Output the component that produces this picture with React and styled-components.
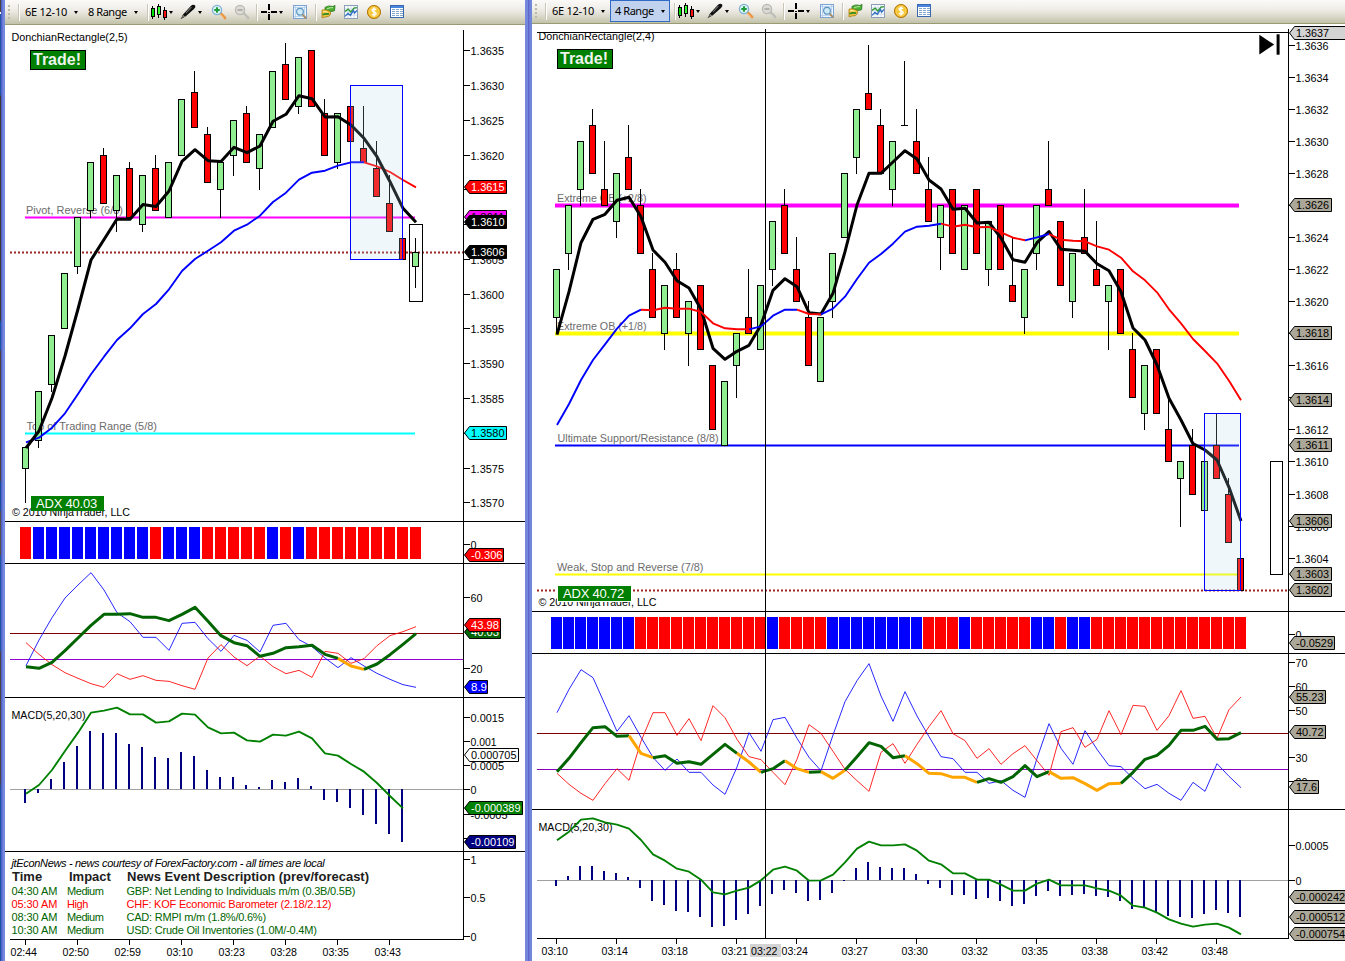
import React from "react";
import styled, { createGlobalStyle } from "styled-components";

const GlobalStyle = createGlobalStyle`
  html, body { margin: 0; padding: 0; background: #fff; overflow: hidden; }
  *, *::before, *::after { box-sizing: border-box; }
`;

const CHART_FONT = '"Liberation Sans", Arial, sans-serif';
const UI_FONT = '"Noto Sans", Tahoma, sans-serif';

/* ---------- frame ---------- */

const Screen = styled.div`
  display: flex;
  width: 1345px;
  height: 961px;
  overflow: hidden;
  background: #fff;
`;

const DesktopEdge = styled.div`
  flex: 0 0 1px;
  background: linear-gradient(#4a453c 0 12px, #fff 12px 14px, #1f57a8 14px 95px, #3d3830 96px 320px, #1558a8 322px 350px, #4a4238 351px 480px, #17509c 482px 510px, #55504a 512px 555px, #1a58a4 556px 650px, #4a4440 652px 780px, #1558a8 790px 961px);
`;

const FrameEdge = styled.div`
  flex: 0 0 ${(p) => p.$width}px;
  background: ${(p) =>
    p.$double
      ? "linear-gradient(90deg, #7a86e0 0 1px, #7088dc 1px 2px, #7488dd 2px 3px, #6464c8 3px 4px, #6d7ad6 4px 5px, #7088dc 5px 7px)"
      : "linear-gradient(90deg, #5560c4 0 1px, #6478d8 1px 2px, #7488dd 2px 4px)"};
`;

const ChartWindow = styled.section`
  display: flex;
  flex-direction: column;
  flex: 0 0 ${(p) => p.$width}px;
  height: 961px;
  background: #fff;
`;

/* ---------- toolbar ---------- */

const Toolbar = styled.header`
  display: flex;
  align-items: center;
  flex: 0 0 ${(p) => p.$height}px;
  padding-bottom: ${(p) => 25 - p.$height}px;
  background: linear-gradient(#fbfaf8 0, #f1efea 35%, #e3e1d6 60%, #c6c5ae 96%, #c3c2a8 100%);
  border-bottom: 1px solid #9a9a74;
  overflow: hidden;
`;

const Grip = styled.div`
  width: 2px;
  height: 15px;
  margin: 0 8px 0 3px;
  background: repeating-linear-gradient(#bdbba8 0 2px, transparent 2px 4px);
`;

const Separator = styled.div`
  width: 2px;
  height: 17px;
  margin: 0 ${(p) => p.$after}px 0 ${(p) => p.$before || 0}px;
  background: linear-gradient(90deg, #c9c6b5 50%, #fff 50%);
`;

const DropButton = styled.button`
  display: flex;
  align-items: center;
  justify-content: space-between;
  width: ${(p) => p.$width}px;
  height: 22px;
  margin: 0;
  padding: 0 4px 0 ${(p) => p.$pad}px;
  border: 1px solid ${(p) => (p.$active ? "#316ac5" : "transparent")};
  background: ${(p) => (p.$active ? "#c1d2ee" : "transparent")};
  color: #000;
  font: 11px/20px ${UI_FONT};
  letter-spacing: ${(p) => p.$track}px;
  white-space: nowrap;
`;

const Caret = styled.span`
  flex: none;
  width: 0;
  height: 0;
  border: 2.5px solid transparent;
  border-top: 3px solid #000;
  border-bottom: 0;
`;

const IconDrop = styled.span`
  display: flex;
  align-items: center;
  gap: 2px;
  width: ${(p) => p.$width || 29}px;
  padding-left: 1px;
`;

const IconSlot = styled.span`
  display: flex;
  align-items: center;
  justify-content: center;
  width: ${(p) => p.$width || 23}px;
`;

const Glyph = styled.svg`
  display: block;
  flex: none;
  width: 16px;
  height: 16px;
`;

const CandlesIcon = () => (
  <Glyph viewBox="0 0 16 16" shapeRendering="crispEdges">
    <path d="M1.5 2v13M7.5 0v14M13.5 3v13" stroke="#000" />
    <rect x="0" y="4" width="4" height="9" fill="#000" />
    <rect x="6" y="2" width="4" height="9" fill="#000" />
    <rect x="12" y="6" width="4" height="8" fill="#000" />
    <rect x="1" y="5" width="2" height="7" fill="#0d0" />
    <rect x="7" y="3" width="2" height="7" fill="#3f3" />
    <rect x="13" y="7" width="2" height="6" fill="#f11" />
  </Glyph>
);

const PenIcon = () => (
  <Glyph viewBox="0 0 16 16">
    <path d="M0.5 15.2L3 10.5L11 1.8Q13.5 0 15.2 1.6Q16 3.5 14 5L5.5 12.5Z" fill="#111" />
    <path d="M6 9L11.4 3.2" stroke="#777" strokeWidth="1.1" />
    <path d="M3 11.6L4.8 13" stroke="#bbb" strokeWidth="1" />
    <path d="M1.4 14.2L3.3 12" stroke="#ddd" strokeWidth="0.6" />
  </Glyph>
);

const LensIcon = ({ plus }) => (
  <Glyph viewBox="0 0 16 16">
    <path d="M9.6 9.6L14 14" stroke={plus ? "#e89440" : "#bdbdb8"} strokeWidth="2.8" strokeLinecap="round" />
    <path d="M9.2 10.4L12.8 14.2" stroke={plus ? "#ffd79a" : "#dddcd8"} strokeWidth="0.9" />
    <circle cx="6" cy="6" r="4.6" fill={plus ? "#d8f2f2" : "#dcdbd6"} stroke={plus ? "#7fb0d8" : "#b9b8b2"} strokeWidth="1.3" />
    {plus ? (
      <path d="M3.3 6h5.4M6 3.3v5.4" stroke="#1d9a3a" strokeWidth="1.9" />
    ) : (
      <path d="M3.5 6h5" stroke="#a5a49e" strokeWidth="1.5" />
    )}
  </Glyph>
);

const CrossIcon = () => (
  <Glyph viewBox="0 0 16 16" shapeRendering="crispEdges">
    <path d="M0 8h6M10 8h6M8 0v6M8 10v6" stroke="#000" strokeWidth="2" />
    <path d="M7 8h2" stroke="#000" strokeWidth="1" />
  </Glyph>
);

const PageLensIcon = () => (
  <Glyph viewBox="0 0 16 16">
    <rect x="1.5" y="1.5" width="13" height="13" fill="#eef6fd" stroke="#7ba4d4" />
    <path d="M3.5 2v12M12.5 2v12M2 3.5h12M2 12.5h12" stroke="#b5d0ec" strokeWidth="0.9" />
    <path d="M10.4 10.4L13.6 13.8" stroke="#b08a55" strokeWidth="1.8" strokeLinecap="round" />
    <circle cx="8" cy="7.8" r="3.4" fill="#cfeaf7" stroke="#5f95c4" strokeWidth="1.2" />
  </Glyph>
);

const MoneyIcon = () => (
  <Glyph viewBox="0 0 16 16">
    <path d="M5 3.4Q9 1.2 11 2.2T15 1.4L14.6 6.6Q12 8 10 7.2T5 8.4Z" fill="#4fae35" stroke="#1f7418" strokeWidth="0.8" />
    <path d="M7 4.8Q10 3.4 13 3.6" stroke="#b8ea9a" strokeWidth="1" fill="none" />
    <path d="M2 6.2Q4.5 5 8 6.6L10.6 7.8L10.2 11Q8.4 13.4 6 12.8L2 13.8Z" fill="#f0c33c" stroke="#a8780f" strokeWidth="0.8" />
    <path d="M2.6 10.8Q5.4 9.4 9 10.2" stroke="#2c8a22" strokeWidth="1.7" fill="none" />
    <path d="M3 7.8Q5 7 7.6 8.2" stroke="#fff0ac" strokeWidth="0.9" fill="none" />
  </Glyph>
);

const LineChartIcon = () => (
  <Glyph viewBox="0 0 16 16">
    <rect x="1.5" y="1.5" width="13" height="13" fill="#fbfdff" stroke="#8d9fb8" />
    <path d="M2 4.8h12M2 8h12M2 11.2h12M5 2v12M8 2v12M11 2v12" stroke="#c4d3e6" strokeWidth="0.7" />
    <path d="M2 7.4L5.2 5.2L7.8 8L11 4.2L14 3.6" stroke="#2f9a33" strokeWidth="1.3" fill="none" />
    <path d="M2 12.4L5 9.4L7.4 11.2L10.4 6.6L11.6 9L14 6.4" stroke="#2d6cc4" strokeWidth="1.3" fill="none" />
  </Glyph>
);

const CoinIcon = () => (
  <Glyph viewBox="0 0 16 16">
    <circle cx="8" cy="8" r="6.6" fill="#e9ac14" stroke="#ad7206" strokeWidth="0.9" />
    <circle cx="8" cy="8" r="5.1" fill="#f6c737" stroke="#ffe28a" strokeWidth="0.6" />
    <path d="M10.2 5.7Q8 4.3 6.3 5.5Q5.5 7.2 8 7.9Q10.8 8.7 9.9 10.4Q8.1 11.6 5.8 10.3M8 3.5v9" stroke="#fff" strokeWidth="1.4" fill="none" />
  </Glyph>
);

const TableIcon = () => (
  <Glyph viewBox="0 0 16 16" shapeRendering="crispEdges">
    <rect x="1.5" y="1.5" width="13" height="12" fill="#fff" stroke="#3a68b0" />
    <rect x="2" y="2" width="12" height="2" fill="#4b86de" />
    <path d="M3 5.5h3M3 7.5h3M3 9.5h3M3 11.5h3M7 5.5h3M7 7.5h3M7 9.5h3M7 11.5h3M11 5.5h3M11 7.5h3M11 9.5h3M11 11.5h3" stroke="#86a6cc" />
  </Glyph>
);

const ChartToolbar = ({ height, range, active }) => (
  <Toolbar $height={height}>
    <Grip />
    <Separator $after={0} />
    <DropButton $width={63} $pad={4} $track={-0.25}>
      6E 12-10
      <Caret />
    </DropButton>
    <DropButton $width={60} $pad={4} $track={-0.45} $active={active}>
      {range}
      <Caret />
    </DropButton>
    <Separator $before={4} $after={1} />
    <IconDrop><CandlesIcon /><Caret /></IconDrop>
    <IconDrop $width={28}><PenIcon /><Caret /></IconDrop>
    <IconSlot><LensIcon plus /></IconSlot>
    <IconSlot><LensIcon /></IconSlot>
    <Separator $before={3} $after={2} />
    <IconDrop $width={28}><CrossIcon /><Caret /></IconDrop>
    <IconSlot><PageLensIcon /></IconSlot>
    <Separator $before={4} $after={0} />
    <IconSlot $width={22}><MoneyIcon /></IconSlot>
    <IconSlot><LineChartIcon /></IconSlot>
    <IconSlot><CoinIcon /></IconSlot>
    <IconSlot><TableIcon /></IconSlot>
  </Toolbar>
);

/* ---------- panes ---------- */

const PaneRow = styled.div`
  display: flex;
  flex: 0 0 ${(p) => p.$height}px;
  border-bottom: ${(p) => (p.$last ? 0 : 1)}px solid #000;
`;

const PlotArea = styled.div`
  position: relative;
  flex: 0 0 ${(p) => p.$width}px;
`;

const Drawing = styled.svg`
  display: block;
  overflow: visible;
  font-family: ${CHART_FONT};
  font-size: 11px;
`;

const TradeBadge = styled.div`
  position: absolute;
  left: 25px;
  top: 25px;
  width: 56px;
  height: 20px;
  padding-left: 2px;
  border: 1px solid #000;
  background: #008000;
  color: #eef4ee;
  font: bold 16px/17px ${CHART_FONT};
`;

const AdxBadge = styled.div`
  position: absolute;
  left: 26px;
  bottom: ${(p) => p.$bottom}px;
  width: 73px;
  height: 15px;
  padding-left: 5px;
  background: #008000;
  color: #fff;
  font: 13px/15px ${CHART_FONT};
  letter-spacing: -0.2px;
  white-space: nowrap;
`;

const Label = ({ x, y, width, children, ...rest }) => (
  <text x={x} y={y} textLength={width} lengthAdjust="spacingAndGlyphs" {...rest}>
    {children}
  </text>
);

const Pane = ({ win, top, height, last, plot, axis, overlay, html }) => {
  const inner = height - (last ? 0 : 1);
  return (
    <PaneRow $height={height} $last={last}>
      <PlotArea $width={win.axisX - win.left}>
        {html || (
          <Drawing width={win.axisX - win.left} height={inner} viewBox={`${win.left} ${top} ${win.axisX - win.left} ${inner}`}>
            {plot}
            {win.crossX && (
              <path d={`M${win.crossX + 0.5} ${Math.max(top, 29)}V${top + height}`} stroke="#000" shapeRendering="crispEdges" />
            )}
          </Drawing>
        )}
        {overlay}
      </PlotArea>
      <Drawing width={win.right - win.axisX} height={inner} viewBox={`${win.axisX} ${top} ${win.right - win.axisX} ${inner}`}>
        <path d={`M${win.axisX + 0.5} ${Math.max(top, win.axisTop)}V${top + height}`} stroke="#000" shapeRendering="crispEdges" />
        {axis}
      </Drawing>
    </PaneRow>
  );
};

const Ticks = ({ win, items }) =>
  items.map(([y, label, width]) => (
    <g key={y}>
      <path d={`M${win.axisX} ${Math.floor(y) + 0.5}h7`} stroke="#000" shapeRendering="crispEdges" />
      {label && (
        <Label x={win.axisX + 7.5} y={Math.floor(y) + 5} width={width}>{label}</Label>
      )}
    </g>
  ));

const Tag = ({ win, y, text, textWidth, right, fill, color = "#000" }) => {
  const x = win.axisX + 1.5;
  const t = Math.floor(y) - 6.5;
  return (
    <g>
      <path d={`M${x} ${t + 6.5}L${x + 5} ${t}H${right}V${t + 13}H${x + 5}Z`} fill={fill} stroke="#000" />
      <Label x={win.axisX + 8} y={t + 10.5} width={textWidth} fill={color}>{text}</Label>
    </g>
  );
};

const toPoints = (xs, ys) => ys.map((y, i) => `${xs(i)},${y}`).join(" ");

const Trend = ({ xs, ys, runs, width }) =>
  runs.map(([from, to, color]) => (
    <polyline
      key={from}
      points={ys.slice(from, to + 1).map((y, k) => `${xs(from + k)},${y}`).join(" ")}
      fill="none"
      stroke={color}
      strokeWidth={width}
      strokeLinejoin="round"
    />
  ));

const Candle = ({ x, y, bar }) => {
  const [kind, top, bottom, high = top, low = bottom] = bar;
  const t = y(top);
  const b = y(bottom);
  return (
    <g stroke="#000" shapeRendering="crispEdges">
      {y(high) < y(low) && <path d={`M${x + 0.5} ${y(high)}V${y(low) + 1}`} />}
      {t === b ? (
        <path d={`M${x - 3} ${t + 0.5}h7`} />
      ) : (
        <rect x={x - 2.5} y={t + 0.5} width="6" height={b - t} fill={kind === "g" ? "#90ee90" : "#f00"} />
      )}
    </g>
  );
};

const Strip = ({ x, pattern, top }) =>
  pattern.split("").map((c, i) => (
    <rect key={i} x={x(i) - 5} y={top} width="11" height="32" fill={c === "B" ? "#00f" : "#f00"} shapeRendering="crispEdges" />
  ));

const Histogram = ({ x, zero, values }) =>
  values.map((v, i) => (
    <rect key={i} x={x(i) - 1} y={Math.min(zero, v)} width="2" height={Math.abs(v - zero)} fill="#000080" shapeRendering="crispEdges" />
  ));

const Guide = ({ x1, x2, y, color, width = 1 }) => (
  <path d={`M${x1} ${y}H${x2}`} stroke={color} strokeWidth={width} />
);

const LastPrice = ({ x1, x2, y }) => (
  <path d={`M${x1} ${y}H${x2}`} stroke="#8b0000" strokeWidth="2" strokeDasharray="2 2" strokeOpacity="0.85" />
);

const Zone = ({ x, y, width, height }) => (
  <rect x={x} y={y} width={width} height={height} fill="#add8e6" fillOpacity="0.2" stroke="#00f" shapeRendering="crispEdges" />
);

const TimeAxis = ({ win, top, x, step, labels, cursor }) => (
  <Drawing width={win.right - win.left} height={961 - top} viewBox={`${win.left} ${top} ${win.right - win.left} ${961 - top}`}>
    <g stroke="#000" shapeRendering="crispEdges">
      <path d={`M${win.left + 5} ${top + 0.5}H${win.axisX + 1}`} />
      {labels.map((l, i) => (
        <path key={l} d={`M${x(i * step) + 0.5} ${top}v6`} />
      ))}
    </g>
    {cursor && <rect x="750" y="944" width="31" height="13" fill="#d3d3d3" />}
    {cursor && <Label x={751} y={top + 17} width={26.5}>{cursor}</Label>}
    {labels.map((l, i) => (
      <Label key={l} x={x(i * step) - 14.5} y={top + 17} width={26.5}>{l}</Label>
    ))}
  </Drawing>
);

/* ---------- news ---------- */

const News = styled.div`
  padding: 5px 0 0 6.5px;
  font: 11px/13px ${CHART_FONT};
  white-space: nowrap;
`;

const NewsTitle = styled.div`
  height: 13px;
  font-style: italic;
  letter-spacing: -0.34px;
  color: #000;
`;

const NewsLine = styled.div`
  display: grid;
  grid-template-columns: 55.5px 59.5px 1fr;
  height: 13px;
  color: ${(p) => p.$color};
`;

const NewsHead = styled(NewsLine)`
  grid-template-columns: 57px 58px 1fr;
  height: 15px;
  padding-left: 0.5px;
  font: bold 13px/14px ${CHART_FONT};
`;

const NewsCell = styled.span`
  letter-spacing: ${(p) => p.$track}px;
`;

const NEWS = [
  ["04:30 AM", "Medium", "GBP: Net Lending to Individuals m/m (0.3B/0.5B)", "#006400"],
  ["05:30 AM", "High", "CHF: KOF Economic Barometer (2.18/2.12)", "#f00"],
  ["08:30 AM", "Medium", "CAD: RMPI m/m (1.8%/0.6%)", "#006400"],
  ["10:30 AM", "Medium", "USD: Crude Oil Inventories (1.0M/-0.4M)", "#006400"],
];

const NewsPanel = () => (
  <News>
    <NewsTitle>jtEconNews - news courtesy of ForexFactory.com - all times are local</NewsTitle>
    <NewsHead $color="#202020">
      <span>Time</span>
      <span>Impact</span>
      <span>News Event Description (prev/forecast)</span>
    </NewsHead>
    {NEWS.map(([time, impact, text, color]) => (
      <NewsLine key={time} $color={color}>
        <NewsCell $track={-0.08}>{time}</NewsCell>
        <NewsCell $track={-0.45}>{impact}</NewsCell>
        <NewsCell $track={-0.22}>{text}</NewsCell>
      </NewsLine>
    ))}
  </News>
);

/* ---------- 8 Range chart ---------- */

const L = { left: 5, axisX: 463, right: 525, axisTop: 30 };
const lx = (i) => 25 + 13 * i;
const lxm = (i) => lx(i) + 1;
const ly = (n) => Math.floor(294.2 - 6.957 * n);

/* kind, body top, body bottom, high, low (ticks from 1.3600) */
const L_BARS = [
  ["g", -22, -25, -22, -30], ["g", -14, -21, -14, -22], ["g", -6, -13, -6, -14], ["g", 3, -5],
  ["g", 11, 4, 11, 3], ["g", 19, 12, 19, 11], ["r", 20, 13, 21, 13], ["g", 17, 12, 17, 9],
  ["r", 18, 11, 19, 11], ["g", 17, 10, 17, 9], ["r", 18, 12, 20, 12], ["g", 19, 11],
  ["g", 28, 20], ["r", 29, 24, 32, 24], ["r", 23, 16, 24, 16], ["g", 19, 15, 19, 11],
  ["g", 25, 20, 25, 17], ["r", 26, 19, 27, 19], ["g", 23, 18, 23, 15], ["g", 32, 24],
  ["r", 33, 28, 36, 28], ["g", 34, 27, 34, 26], ["r", 35, 27], ["r", 26, 20, 28, 20],
  ["g", 26, 19, 26, 18], ["r", 27, 22], ["r", 21, 19, 27, 19], ["r", 18, 14, 22, 14],
  ["r", 13, 9, 17, 9], ["r", 8, 5], ["g", 6, 4, 8, 1],
];
const L_FAST = [448, 431, 398, 356, 309, 260, 239.5, 219, 219.3, 204.5, 206.5, 191, 161.3, 149.7, 160.7, 161.5, 147.3, 152.7, 146, 121.3, 114.3, 95.7, 98.7, 117, 116.7, 125, 138.3, 156.7, 181.7, 208.3, 222.3];
const L_SLOW = [442.3, 437.7, 427.7, 413.3, 394, 374.3, 356.7, 340, 328.3, 314, 304, 289.3, 271, 259, 250.7, 242.3, 230.7, 224.7, 215.7, 202, 192.7, 179.7, 172.7, 170.7, 165.7, 162.3, 162.3, 166.3, 172, 180, 187.3];

const third = (origin) => (v) => origin + v / 3;
const L_PLUS = [452, 375, 308, 249, 210, 173, 225, 293, 320, 367, 367, 406, 325, 322, 371, 409, 361, 376, 411, 331, 325, 374, 395, 429, 458, 428, 453, 475, 493, 509, 517].map(third(515));
const L_MINUS = [383, 418, 449, 473, 490, 506, 517, 476, 493, 482, 496, 499, 512, 523, 429, 389, 426, 452, 423, 455, 476, 466, 487, 409, 415, 445, 431, 392, 362, 350, 335].map(third(515));
const L_ADX = [455, 460, 442, 407, 369, 331, 298, 298, 296, 307, 307, 317, 298, 277, 319, 362, 383, 392, 424, 415, 398, 395, 391, 418, 430, 453, 463, 447, 419, 388, 356].map(third(515));
const L_HIST = [324, 293, 252, 201, 153, 108, 114, 114, 147, 156, 186, 189, 171, 183, 225, 246, 246, 270, 276, 255, 261, 249, 273, 315, 321, 339, 360, 387, 417, 441].map(third(695));
const L_MACD = [296, 270, 225, 168, 113, 53, 47, 38, 58, 58, 83, 79, 56, 59, 97, 115, 113, 136, 140, 119, 122, 110, 130, 175, 182, 207, 230, 264, 303, 340].map(third(695));

const GREY = "#6c6c6c";

const EightRange = () => (
  <ChartWindow $width={520}>
    <ChartToolbar height={25} range="8 Range" />
    <Pane
      win={L}
      top={25}
      height={497}
      plot={
        <>
          <Label x={11.5} y={41} width={116}>DonchianRectangle(2,5)</Label>
          <Label x={26} y={214} width={97} fill={GREY}>Pivot, Reverse (6/8)</Label>
          <Label x={26.5} y={430} width={130.5} fill={GREY}>Top of Trading Range (5/8)</Label>
          <Label x={12} y={516} width={118}>© 2010 NinjaTrader, LLC</Label>
          <Guide x1={25} x2={415} y={217.5} color="#f0f" width={2} />
          <Guide x1={25} x2={415} y={433.5} color="#0ff" width={2} />
          <LastPrice x1={10} x2={463} y={252.5} />
          {L_BARS.map((bar, i) => <Candle key={i} x={lx(i)} y={ly} bar={bar} />)}
          <Trend xs={lxm} ys={L_SLOW} runs={[[0, 26, "#00f"], [26, 30, "#f00"]]} width={1.9} />
          <Trend xs={lxm} ys={L_FAST} runs={[[0, 30, "#000"]]} width={3} />
          <Zone x={350.5} y={85.5} width={52} height={174} />
          <rect x="409.5" y="224.5" width="13" height="77" fill="none" stroke="#000" shapeRendering="crispEdges" />
        </>
      }
      overlay={
        <>
          <TradeBadge>Trade!</TradeBadge>
          <AdxBadge $bottom={10}>ADX 40.03</AdxBadge>
        </>
      }
      axis={
        <>
          <Ticks win={L} items={[35, 30, 25, 20, 15, 10, 5, 0, -5, -10, -15, -20, -25, -30].map((n) => [ly(n), `1.${3600 + n}`, 33.5])} />
          <Tag win={L} y={187} text="1.3615" textWidth={33.5} right={506.5} fill="#f00" color="#fff" />
          <Tag win={L} y={217} text="1.3611" textWidth={33.5} right={506.5} fill="#f0f" />
          <Tag win={L} y={222} text="1.3610" textWidth={33.5} right={506.5} fill="#000" color="#fff" />
          <Tag win={L} y={252} text="1.3606" textWidth={33.5} right={506.5} fill="#000" color="#fff" />
          <Tag win={L} y={433} text="1.3580" textWidth={33.5} right={506.5} fill="#0ff" />
        </>
      }
    />
    <Pane
      win={L}
      top={522}
      height={42}
      plot={<Strip x={lx} top={527} pattern="RBBBBBBBBBRBBBRRRRRBRBRRRRRRRRR" />}
      axis={
        <>
          <Ticks win={L} items={[[544, "0", 6]]} />
          <Tag win={L} y={555} text="-0.306" textWidth={31.5} right={503.5} fill="#f00" color="#fff" />
        </>
      }
    />
    <Pane
      win={L}
      top={564}
      height={134}
      plot={
        <>
          <Guide x1={10} x2={463} y={633.5} color="#800000" />
          <Guide x1={10} x2={463} y={659.5} color="#9400d3" />
          <polyline points={toPoints(lxm, L_PLUS)} fill="none" stroke="#00f" strokeWidth="0.85" />
          <polyline points={toPoints(lxm, L_MINUS)} fill="none" stroke="#f00" strokeWidth="0.85" />
          <Trend xs={lxm} ys={L_ADX} width={3} runs={[[0, 24, "#006400"], [24, 26, "#ffa500"], [26, 30, "#006400"]]} />
        </>
      }
      axis={
        <>
          <Ticks win={L} items={[[597, "60", 12], [668, "20", 12]]} />
          <Tag win={L} y={632} text="40.03" textWidth={28} right={500.5} fill="#006400" color="#fff" />
          <Tag win={L} y={625} text="43.98" textWidth={28} right={500.5} fill="#f00" color="#fff" />
          <Tag win={L} y={687} text="8.9" textWidth={16} right={487.5} fill="#00f" color="#fff" />
        </>
      }
    />
    <Pane
      win={L}
      top={698}
      height={154}
      plot={
        <>
          <Label x={11.5} y={719} width={74}>MACD(5,20,30)</Label>
          <Guide x1={10} x2={463} y={789.5} color="#a0a0a0" />
          <Histogram x={lx} zero={789} values={L_HIST} />
          <Trend xs={lxm} ys={L_MACD} width={1.9} runs={[[0, 29, "#008000"]]} />
        </>
      }
      axis={
        <>
          <Ticks win={L} items={[[717, "0.0015", 33.5], [741, "0.001", 26], [765, "0.0005", 33.5], [789, "0", 6], [814, "-0.0005", 37], [838, "-0.001", 30]]} />
          <Tag win={L} y={755} text="0.000705" textWidth={45.5} right={518.5} fill="#fff" />
          <Tag win={L} y={808} text="-0.000389" textWidth={49.5} right={522.5} fill="#008000" color="#fff" />
          <Tag win={L} y={842} text="-0.00109" textWidth={43.5} right={515.5} fill="#000080" color="#fff" />
        </>
      }
    />
    <Pane
      win={L}
      top={852}
      height={87}
      last
      html={<NewsPanel />}
      axis={<Ticks win={L} items={[[859, "1", 6], [897, "0.5", 15], [936, "0", 6]]} />}
    />
    <TimeAxis win={L} top={939} x={lx} step={4} labels={["02:44", "02:50", "02:59", "03:10", "03:23", "03:28", "03:35", "03:43"]} />
  </ChartWindow>
);

/* ---------- 4 Range chart ---------- */

const R = { left: 532, axisX: 1288, right: 1345, axisTop: 29, crossX: 765 };
const rx = (i) => 556 + 12 * i;
const rxm = (i) => rx(i) + 1;
const ry = (n) => Math.floor(45.2 + (36 - n) * 16.03);
const TAG = "#aca899";

const R_BARS = [
  ["g", 22, 19, 22, 18], ["g", 26, 23, 26, 22], ["g", 30, 27, 30, 26], ["r", 31, 28, 32, 28],
  ["r", 27, 26, 30, 26], ["g", 28, 25, 28, 24], ["r", 29, 27, 31, 27], ["r", 26, 23, 27, 23],
  ["r", 22, 19, 23, 19], ["g", 21, 18, 21, 17], ["r", 22, 19, 23, 19], ["g", 20, 18, 20, 16],
  ["r", 21, 17], ["r", 16, 12], ["g", 15, 11], ["g", 18, 16, 18, 14],
  ["r", 19, 18, 22, 18], ["g", 21, 17], ["g", 25, 22, 25, 21], ["r", 26, 23, 27, 23],
  ["r", 22, 20, 24, 20], ["r", 19, 16, 20, 16], ["g", 19, 15], ["g", 23, 20, 23, 19],
  ["g", 28, 24], ["g", 32, 29, 32, 28], ["r", 33, 32, 36, 32], ["r", 31, 28, 32, 28],
  ["g", 30, 27, 30, 26], ["g", 31, 31, 35, 31], ["r", 30, 28, 32, 28], ["r", 27, 25, 29, 25],
  ["g", 26, 24, 26, 22], ["r", 27, 23], ["g", 26, 22], ["r", 27, 23],
  ["g", 25, 22, 25, 21], ["r", 26, 22], ["r", 21, 20, 24, 20], ["g", 22, 19, 22, 18],
  ["g", 26, 23, 26, 22], ["r", 27, 26, 30, 26], ["r", 25, 21], ["g", 23, 20, 23, 19],
  ["r", 24, 23, 27, 23], ["r", 22, 21, 25, 21], ["g", 21, 20, 21, 17], ["r", 22, 18],
  ["r", 17, 14, 18, 14], ["g", 16, 13, 16, 12], ["r", 17, 13], ["r", 12, 10, 14, 10],
  ["g", 10, 9, 10, 6], ["r", 11, 8, 12, 8], ["g", 10, 7], ["r", 11, 9, 13, 9],
  ["r", 8, 5, 9, 5], ["r", 4, 2],
];
const R_FAST = [334.7, 291.7, 242.7, 219.3, 214.3, 200.3, 197.3, 216.7, 250, 262.3, 280.7, 288, 309.3, 348.3, 359.3, 351.3, 345.3, 325, 290.3, 278.7, 286.7, 312.7, 314, 293.3, 251.7, 205, 173.3, 173.3, 162, 150.7, 159, 180, 189, 209.3, 208.3, 223, 222.3, 238, 259.7, 262.3, 242.7, 231.5, 249.3, 250.3, 251.3, 263.7, 270.7, 291.7, 328, 340, 365, 398.3, 420, 443.7, 450, 460, 487.3, 521];
const R_SLOW = [425, 404, 380, 360, 344.3, 328.7, 315.7, 309.7, 310.3, 307.7, 308.7, 308.7, 312, 323.3, 328.3, 329.3, 329.3, 326.3, 315.7, 309.7, 309.7, 314, 314.3, 308.7, 296.7, 279, 262.7, 254, 243.7, 231.7, 226.7, 225.7, 223.7, 226.7, 224.7, 227.3, 227, 232.3, 237.7, 240.3, 237.3, 234, 239.7, 240.7, 241.3, 246.3, 249.7, 257.7, 271.3, 280.3, 292.3, 309.3, 323.3, 339, 351, 363.3, 380.7, 400.3];
const R_PLUS = [38, -32, -91, -67, 14, 94, 47, 112, 172, 211, 177, 217, 217, 255, 283, 201, 98, 154, 59, 52, 115, 172, 212, 105, 5, -58, -109, -12, 64, -25, 48, 110, 170, 176, 217, 217, 250, 242, 271, 292, 175, 71, 145, 193, 92, 148, 197, 200, 235, 266, 253, 280, 301, 247, 274, 191, 229, 263].map(third(700));
const R_MINUS = [220, 253, 280, 301, 251, 206, 241, 124, 38, 38, 106, 56, 122, 17, 53, 118, 170, 179, 217, 254, 178, 74, 100, 154, 208, 242, 274, 157, 131, 190, 133, 80, 32, 101, 122, 175, 146, 193, 161, 137, 182, 226, 95, 83, 142, 118, 32, 104, 16, 19, 91, 47, -28, 55, 49, 115, 29, -9].map(third(700));
const R_ADX = [215, 175, 128, 83, 80, 109, 107, 160, 173, 167, 190, 185, 193, 163, 133, 160, 186, 217, 206, 182, 206, 217, 215, 235, 211, 170, 128, 139, 173, 167, 191, 220, 221, 232, 232, 247, 236, 247, 230, 197, 230, 215, 235, 233, 251, 271, 251, 250, 217, 178, 166, 136, 91, 91, 79, 118, 116, 98].map(third(700));
const R_HIST = [558, 528, 498, 498, 513, 519, 531, 564, 603, 615, 633, 636, 651, 681, 678, 660, 642, 618, 582, 570, 579, 603, 600, 579, 543, 504, 486, 501, 504, 504, 522, 552, 564, 585, 585, 597, 594, 603, 618, 612, 588, 573, 588, 585, 582, 588, 591, 603, 627, 624, 636, 648, 651, 654, 642, 630, 639, 651].map(third(700));
const R_MACD = [421, 395, 359, 355, 367, 374, 386, 420, 463, 482, 506, 515, 539, 577, 583, 572, 563, 541, 509, 500, 512, 542, 541, 524, 487, 446, 425, 436, 436, 433, 452, 482, 493, 520, 520, 539, 539, 554, 572, 572, 551, 539, 556, 556, 556, 565, 572, 587, 617, 623, 638, 658, 671, 680, 674, 671, 683, 703].map(third(700));

const UP = "#006400";
const FLAT = "#ffa500";
const R_ADX_RUNS = [
  [0, 6, UP], [6, 8, FLAT], [8, 15, UP], [15, 17, FLAT], [17, 19, UP], [19, 21, FLAT], [21, 22, UP],
  [22, 24, FLAT], [24, 29, UP], [29, 35, FLAT], [35, 41, UP], [41, 47, FLAT], [47, 57, UP],
];
const R_SLOW_RUNS = [
  [0, 7, "#00f"], [7, 16, "#f00"], [16, 20, "#00f"], [20, 22, "#f00"], [22, 32, "#00f"],
  [32, 39, "#f00"], [39, 41, "#00f"], [41, 57, "#f00"],
];

const FourRange = () => (
  <ChartWindow $width={813}>
    <ChartToolbar height={24} range="4 Range" active />
    <Pane
      win={R}
      top={24}
      height={588}
      plot={
        <>
          <Label x={538.5} y={40} width={116}>DonchianRectangle(2,4)</Label>
          <Label x={557} y={202} width={89.5} fill={GREY}>Extreme OB (+2/8)</Label>
          <Label x={557} y={330} width={89.5} fill={GREY}>Extreme OB (+1/8)</Label>
          <Label x={557.5} y={442} width={161} fill={GREY}>Ultimate Support/Resistance (8/8)</Label>
          <Label x={557} y={571} width={146.5} fill={GREY}>Weak, Stop and Reverse (7/8)</Label>
          <Label x={538.5} y={606} width={118}>© 2010 NinjaTrader, LLC</Label>
          <Guide x1={555} x2={1239} y={205.5} color="#f0f" width={4} />
          <Guide x1={555} x2={1239} y={333.5} color="#ff0" width={4} />
          <Guide x1={555} x2={1239} y={445.5} color="#00f" width={2} />
          <Guide x1={555} x2={1239} y={574.5} color="#ff0" width={2} />
          <LastPrice x1={537} x2={1288} y={590.5} />
          <rect x="557" y="585" width="75" height="17" fill="#fff" />
          {R_BARS.map((bar, i) => <Candle key={i} x={rx(i)} y={ry} bar={bar} />)}
          <Trend xs={rxm} ys={R_FAST} runs={[[0, 57, "#000"]]} width={3} />
          <Trend xs={rxm} ys={R_SLOW} runs={R_SLOW_RUNS} width={1.9} />
          <Zone x={1204.5} y={413.5} width={36} height={177} />
          <rect x="1270.5" y="461.5" width="12" height="113" fill="none" stroke="#000" shapeRendering="crispEdges" />
          <path d="M537 32.5H1289" stroke="#000" shapeRendering="crispEdges" />
          <path d="M1259.3 34.8L1274.2 44.6L1259.3 54.4Z" fill="#000" />
          <rect x="1276.6" y="34.3" width="3" height="20.4" fill="#000" />
        </>
      }
      overlay={
        <>
          <TradeBadge>Trade!</TradeBadge>
          <AdxBadge $bottom={10}>ADX 40.72</AdxBadge>
        </>
      }
      axis={
        <>
          <Ticks win={R} items={[36, 34, 32, 30, 28, 26, 24, 22, 20, 18, 16, 14, 12, 10, 8, 6, 4].map((n) => [ry(n), `1.${3600 + n}`, 33])} />
          <Tag win={R} y={33} text="1.3637" textWidth={33} right={1350} fill="#d3d3d3" />
          <Tag win={R} y={205} text="1.3626" textWidth={33} right={1331.5} fill={TAG} />
          <Tag win={R} y={333} text="1.3618" textWidth={33} right={1331.5} fill={TAG} />
          <Tag win={R} y={400} text="1.3614" textWidth={33} right={1331.5} fill={TAG} />
          <Tag win={R} y={445} text="1.3611" textWidth={33} right={1331.5} fill={TAG} />
          <Tag win={R} y={521} text="1.3606" textWidth={33} right={1331.5} fill={TAG} />
          <Tag win={R} y={574} text="1.3603" textWidth={33} right={1331.5} fill={TAG} />
          <Tag win={R} y={590} text="1.3602" textWidth={33} right={1331.5} fill={TAG} />
        </>
      }
    />
    <Pane
      win={R}
      top={612}
      height={42}
      plot={<Strip x={rx} top={617} pattern="BBBBBBBRRRRRRRRRRRBRRRRBBBBBBBBRRRBRRRRRBBRBBRRRRRRRRRRRRR" />}
      axis={
        <>
          <Ticks win={R} items={[[634, "0", 6]]} />
          <Tag win={R} y={643} text="-0.0529" textWidth={37} right={1334.5} fill={TAG} />
        </>
      }
    />
    <Pane
      win={R}
      top={654}
      height={156}
      plot={
        <>
          <Guide x1={537} x2={1288} y={733.5} color="#800000" />
          <Guide x1={537} x2={1288} y={769.5} color="#8a00b8" />
          <polyline points={toPoints(rxm, R_PLUS)} fill="none" stroke="#00f" strokeWidth="0.85" />
          <polyline points={toPoints(rxm, R_MINUS)} fill="none" stroke="#f00" strokeWidth="0.85" />
          <Trend xs={rxm} ys={R_ADX} width={3} runs={R_ADX_RUNS} />
        </>
      }
      axis={
        <>
          <Ticks win={R} items={[[662, "70", 12], [686, "60", 12], [710, "50", 12], [757, "30", 12], [781, "20", 12]]} />
          <Tag win={R} y={697} text="55.23" textWidth={27.5} right={1325.5} fill={TAG} />
          <Tag win={R} y={732} text="40.72" textWidth={27.5} right={1325.5} fill={TAG} />
          <Tag win={R} y={787} text="17.6" textWidth={21} right={1318.5} fill={TAG} />
        </>
      }
    />
    <Pane
      win={R}
      top={810}
      height={128}
      last
      plot={
        <>
          <Label x={538.5} y={831} width={74}>MACD(5,20,30)</Label>
          <Guide x1={537} x2={1288} y={880.5} color="#a0a0a0" />
          <Histogram x={rx} zero={880} values={R_HIST} />
          <Trend xs={rxm} ys={R_MACD} width={1.9} runs={[[0, 57, "#008000"]]} />
        </>
      }
      axis={
        <>
          <Ticks win={R} items={[[845, "0.0005", 33], [880, "0", 6]]} />
          <Tag win={R} y={897} text="-0.000242" textWidth={49} right={1350} fill={TAG} />
          <Tag win={R} y={917} text="-0.000512" textWidth={49} right={1350} fill={TAG} />
          <Tag win={R} y={934} text="-0.000754" textWidth={49} right={1350} fill={TAG} />
        </>
      }
    />
    <TimeAxis
      win={R}
      top={938}
      x={rx}
      step={5}
      cursor="03:22"
      labels={["03:10", "03:14", "03:18", "03:21", "03:24", "03:27", "03:30", "03:32", "03:35", "03:38", "03:42", "03:48"]}
    />
  </ChartWindow>
);

export default function App() {
  return (
    <>
      <GlobalStyle />
      <Screen>
        <DesktopEdge />
        <FrameEdge $width={4} />
        <EightRange />
        <FrameEdge $width={7} $double />
        <FourRange />
      </Screen>
    </>
  );
}
